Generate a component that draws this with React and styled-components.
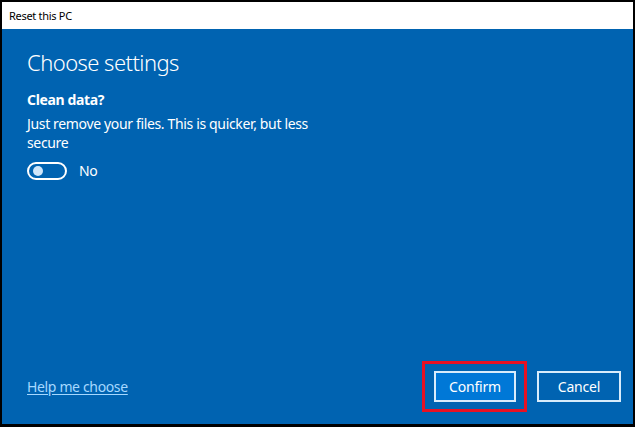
import React from 'react';
import styled, { createGlobalStyle } from 'styled-components';

const GlobalStyle = createGlobalStyle`
  html, body {
    margin: 0;
    padding: 0;
    background: #ffffff;
  }
  body {
    font-family: "Noto Sans", "Open Sans", sans-serif;
  }
`;

const Frame = styled.div`
  width: 635px;
  height: 427px;
  box-sizing: border-box;
  border: 2px solid #000;
  border-bottom-width: 3px;
  display: flex;
  flex-direction: column;
  overflow: hidden;
`;

const TitleBar = styled.div`
  height: 27px;
  flex: none;
  background: #fff;
  padding-left: 7px;
  display: flex;
  align-items: center;
  font-size: 11px;
  color: #000;
  letter-spacing: -0.3px;
`;

const Panel = styled.div`
  flex: 1;
  background: #0063b1;
  color: #fff;
  display: flex;
  flex-direction: column;
  padding: 0 12px 0 25px;
  letter-spacing: -0.35px;
`;

const Heading = styled.h1`
  margin: 18px 0 0;
  font-size: 22px;
  font-weight: 300;
  line-height: 30px;
  letter-spacing: -0.55px;
`;

const Label = styled.div`
  margin-top: 13px;
  font-size: 14px;
  font-weight: 700;
  line-height: 20px;
`;

const Description = styled.p`
  margin: 4px 0 0;
  width: 300px;
  font-size: 14px;
  line-height: 19px;
`;

const ToggleRow = styled.div`
  margin-top: 9px;
  display: flex;
  align-items: center;
  gap: 12px;
  font-size: 14px;
`;

const Toggle = styled.div`
  width: 40px;
  height: 18px;
  box-sizing: border-box;
  border: 2px solid #fff;
  border-radius: 10px;
  display: flex;
  align-items: center;
  padding-left: 4px;
`;

const Knob = styled.span`
  width: 10px;
  height: 10px;
  border-radius: 50%;
  background: #cfe6fa;
`;

const Spacer = styled.div`
  flex: 1;
`;

const Footer = styled.div`
  display: flex;
  align-items: center;
  margin-bottom: 12px;
`;

const HelpLink = styled.a`
  color: #a6d8ff;
  text-decoration: underline;
  text-underline-offset: 2px;
  font-size: 14px;
  cursor: pointer;
`;

const Buttons = styled.div`
  margin-left: auto;
  display: flex;
  align-items: center;
  gap: 10px;
`;

const Highlight = styled.div`
  border: 3px solid #e81123;
  padding: 7px 8px 7px 9px;
  display: flex;
`;

const Button = styled.button`
  width: ${(p) => p.$width}px;
  height: 31px;
  box-sizing: border-box;
  border: 2px solid #d9ecfb;
  background: ${(p) => (p.$primary ? '#0078d7' : 'transparent')};
  color: #fff;
  font-family: inherit;
  font-size: 14px;
  letter-spacing: -0.2px;
  padding: 0;
  cursor: pointer;
`;

export default function App() {
  return (
    <>
      <GlobalStyle />
      <Frame>
        <TitleBar>Reset this PC</TitleBar>
        <Panel>
          <Heading>Choose settings</Heading>
          <Label>Clean data?</Label>
          <Description>Just remove your files. This is quicker, but less secure</Description>
          <ToggleRow>
            <Toggle>
              <Knob />
            </Toggle>
            <span>No</span>
          </ToggleRow>
          <Spacer />
          <Footer>
            <HelpLink>Help me choose</HelpLink>
            <Buttons>
              <Highlight>
                <Button $primary $width={82}>Confirm</Button>
              </Highlight>
              <Button $width={84}>Cancel</Button>
            </Buttons>
          </Footer>
        </Panel>
      </Frame>
    </>
  );
}
